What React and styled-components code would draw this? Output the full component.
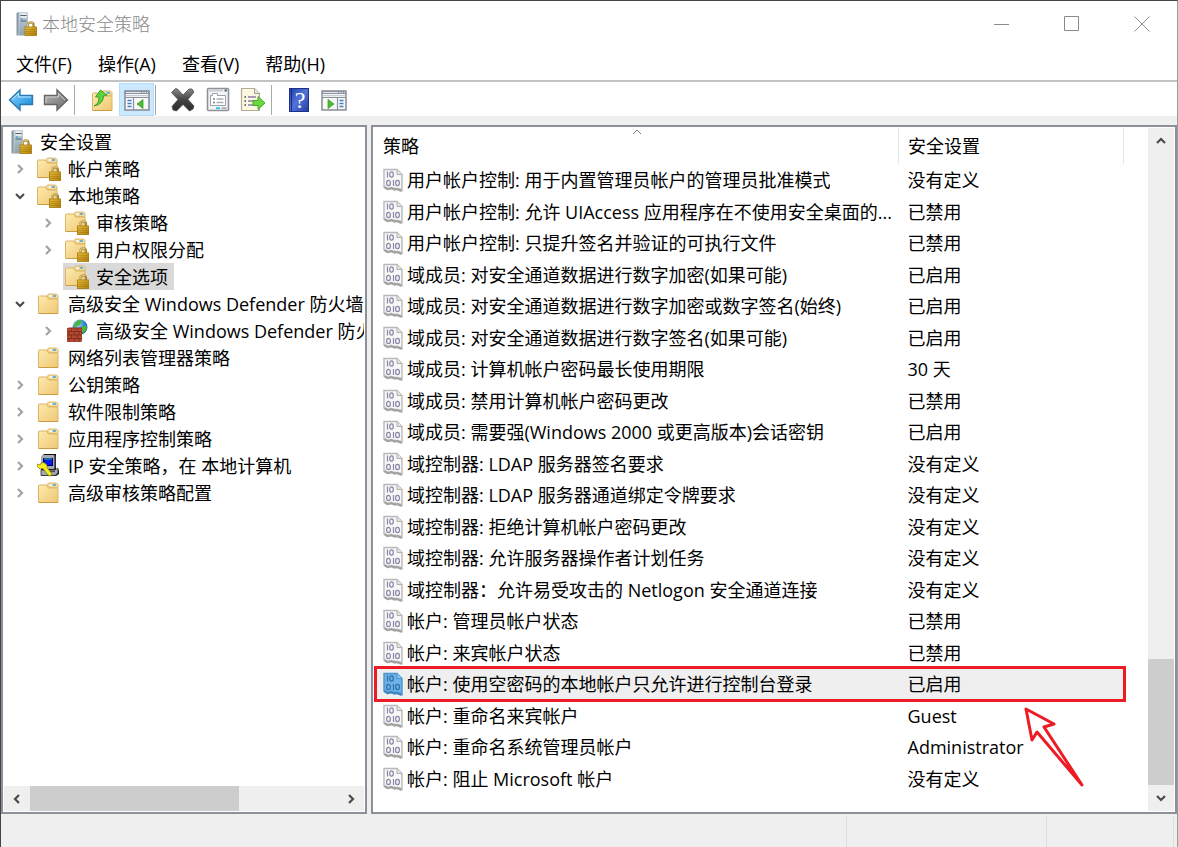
import React, { useState } from 'react';
import styled, { createGlobalStyle } from 'styled-components';

const GlobalStyle = createGlobalStyle`
  * {
    box-sizing: border-box;
  }

  body {
    margin: 0;
    background: #efefef;
    color: #000;
    font-family: "Open Sans", "Noto Sans CJK SC", sans-serif;
    font-size: 18px;
    line-height: 26px;
  }

  button {
    margin: 0;
    padding: 0;
    border: 0;
    background: none;
    color: inherit;
    font: inherit;
  }

  svg {
    display: block;
    flex: none;
  }
`;

const Window = styled.div`
  min-height: 100vh;
  display: flex;
  flex-direction: column;
  border: solid #444;
  border-width: 1px 1px 0 1px;
  border-right-color: #9a9a9a;
`;

const TitleBar = styled.header`
  height: 46px;
  display: flex;
  align-items: center;
  padding-left: 13px;
  background: #fff;
`;

const Title = styled.h1`
  flex: 1;
  margin: 0 0 0 4px;
  font-size: 18px;
  font-weight: 300;
  color: #8a8a8a;
`;

const WindowButton = styled.button`
  width: 70px;
  height: 46px;
  display: flex;
  align-items: center;
  justify-content: center;
`;

const MenuBar = styled.nav`
  height: 33px;
  display: flex;
  align-items: center;
  padding-left: 2px;
  background: #fff;
`;

const MenuButton = styled.button`
  padding: 0 13px;
  white-space: nowrap;
`;

const ToolBar = styled.div`
  height: 36px;
  display: flex;
  align-items: center;
  padding: 1px 0 0 2px;
  background: #fff;
  border-top: 2px solid #c3c3c3;
`;

const ToolButton = styled.button`
  width: 35px;
  height: 33px;
  display: flex;
  align-items: center;
  justify-content: center;
  background: ${props => props.$active ? '#cce8ff' : 'transparent'};
  border: 1px solid ${props => props.$active ? '#b5dcfa' : 'transparent'};
`;

const Separator = styled.div`
  width: 11px;
  height: 30px;
  display: flex;

  &::before {
    content: "";
    margin-left: 1px;
    width: 1px;
    background: #a8a8a8;
  }
`;

const Main = styled.main`
  flex: 1;
  display: flex;
  gap: 4px;
  padding-top: 9px;
`;

const Panel = styled.section`
  display: flex;
  min-width: 0;
  background: #fff;
  border: 2px solid #8c9099;
  padding: 1px;
`;

const TreePanel = styled(Panel)`
  flex: none;
  width: 366px;
  flex-direction: column;
`;

const ListPanel = styled(Panel)`
  flex: 1;
`;

const Tree = styled.ul`
  flex: 1;
  margin: 0;
  padding: 0;
  overflow: hidden;
  list-style: none;
`;

const TreeRow = styled.li`
  height: 27px;
  display: flex;
  padding-left: ${props => 3 + (props.$level - 1) * 28}px;
`;

const Expander = styled.button`
  width: 28px;
  flex: none;
  display: flex;
  align-items: center;
  justify-content: center;
  padding-right: 2px;
`;

const TreeLabel = styled.button`
  display: flex;
  align-items: center;
  gap: 7px;
  padding: 0 6px 0 2px;
  white-space: nowrap;
  background: ${props => props.$selected ? '#d9d9d9' : 'transparent'};
`;

const HScroll = styled.div`
  height: 25px;
  display: flex;
  background: #efefef;
`;

const VScroll = styled.div`
  width: 26px;
  flex: none;
  display: flex;
  flex-direction: column;
  background: #efefef;
`;

const ScrollButton = styled.button`
  flex: none;
  width: 26px;
  height: 26px;
  display: flex;
  align-items: center;
  justify-content: center;
`;

const Track = styled.div`
  flex: 1;
  display: flex;
  flex-direction: ${props => props.$vertical ? 'column' : 'row'};
  justify-content: ${props => props.$vertical ? 'flex-end' : 'flex-start'};
`;

const HThumb = styled.div`
  width: 68%;
  background: #cdcdcd;
`;

const VThumb = styled.div`
  height: 20%;
  background: #cdcdcd;
`;

const ListArea = styled.div`
  flex: 1;
  min-width: 0;
  padding: 0 24px 0 2px;
`;

const PolicyTable = styled.table`
  width: 100%;
  table-layout: fixed;
  border-collapse: collapse;

  th:last-child {
    width: 225px;
  }
`;

const HeadCell = styled.th`
  position: relative;
  height: 36px;
  padding: 0 9px 0 ${props => props.$first ? '7px' : '9px'};
  font-weight: 400;
  text-align: left;
  border-right: 1px solid #e5e5e5;
`;

const SortMark = styled.span`
  position: absolute;
  top: 0;
  left: 50%;
  margin-left: -5px;
`;

const PolicyRow = styled.tr`
  height: 32px;
  background: ${props => props.$selected ? '#efefef' : 'transparent'};
  outline: ${props => props.$selected ? '3px solid #ed1c24' : 'none'};
  outline-offset: -1px;

  &:nth-child(even) {
    height: 31px;
  }
`;

const Cell = styled.td`
  position: relative;
  padding: ${props => props.$first ? '0 0 0 7px' : '0 9px'};
`;

const PolicyName = styled.div`
  display: flex;
  align-items: center;
  gap: 4px;

  span {
    overflow: hidden;
    white-space: nowrap;
    text-overflow: ellipsis;
  }
`;

const Pointer = styled.svg`
  position: absolute;
  top: 36px;
  right: 38px;
`;

const StatusBar = styled.footer`
  height: 33px;
  display: flex;
  padding: 3px 3px 0 0;
`;

const StatusPart = styled.div`
  flex: ${props => props.$wide ? '1' : 'none'};
  width: ${props => props.$wide ? 'auto' : props.$last ? '127px' : '200px'};
  border-right: 1px solid #dcdcdc;
`;

const Gradients = () => (
  <svg width="0" height="0" style={{ position: 'absolute' }} aria-hidden="true">
    <defs>
      <linearGradient id="folder" x1="0" y1="0" x2="1" y2="1">
        <stop offset="0" stopColor="#fdebb0" />
        <stop offset="1" stopColor="#efc773" />
      </linearGradient>
      <linearGradient id="gold" x1="0" y1="0" x2="1" y2="1">
        <stop offset="0" stopColor="#f2cb45" />
        <stop offset="1" stopColor="#b07d08" />
      </linearGradient>
      <linearGradient id="server" x1="0" y1="0" x2="0" y2="1">
        <stop offset="0" stopColor="#c3d0d8" />
        <stop offset="1" stopColor="#8fa1ad" />
      </linearGradient>
      <linearGradient id="blue" x1="0" y1="0" x2="1" y2="1">
        <stop offset="0" stopColor="#8fd6ff" />
        <stop offset="1" stopColor="#0f86d8" />
      </linearGradient>
      <linearGradient id="grey" x1="0" y1="0" x2="1" y2="1">
        <stop offset="0" stopColor="#b5b5b5" />
        <stop offset="1" stopColor="#6c6c6c" />
      </linearGradient>
      <linearGradient id="cross" x1="0" y1="0" x2="0" y2="1">
        <stop offset="0" stopColor="#8a8a8a" />
        <stop offset="0.5" stopColor="#444" />
        <stop offset="1" stopColor="#2b2b2b" />
      </linearGradient>
      <linearGradient id="help" x1="0" y1="0" x2="1" y2="1">
        <stop offset="0" stopColor="#2342ad" />
        <stop offset="0.5" stopColor="#5273d8" />
        <stop offset="1" stopColor="#213da0" />
      </linearGradient>
      <radialGradient id="globe" cx="0.35" cy="0.3" r="0.8">
        <stop offset="0" stopColor="#b8e6ff" />
        <stop offset="0.5" stopColor="#2f8fdc" />
        <stop offset="1" stopColor="#0c3f9c" />
      </radialGradient>
    </defs>
  </svg>
);

const Lock = () => (
  <g>
    <path d="M14.800 15.500v-2.300a2.900 2.900 0 0 1 5.800 0v2.300" fill="none" stroke="#a8893a" strokeWidth="2.200" />
    <path d="M14.500 15v-2a3.100 3.100 0 0 1 5.500-1.800" fill="none" stroke="#ecd999" strokeWidth="0.900" />
    <rect x="12" y="15" width="11.500" height="8.500" fill="url(#gold)" stroke="#a27508" strokeWidth="0.800" />
    <path d="M12.500 17.300h10.500M12.500 19.300h10.500M12.500 21.300h10.500" stroke="#8f6503" strokeWidth="0.700" opacity="0.700" />
  </g>
);

const FolderShape = () => (
  <g>
    <path d="M10 5V2.500l1.500-1.500h8L21 2.500V6z" fill="#f6dd9b" stroke="#d3a954" strokeWidth="0.800" />
    <path d="M1.500 20.500V4q0-1 1-1h7l2 3h8.500q1 0 1 1v13.500z" fill="url(#folder)" stroke="#dbb465" strokeWidth="1" />
    <path d="M13 3h2.500" stroke="#fff" strokeWidth="1.600" />
    <path d="M15.500 3h3.500" stroke="#4ea5de" strokeWidth="1.600" />
    <path d="M2 20.500h19" stroke="#c99b45" strokeWidth="1" />
  </g>
);

const ServerLock = () => (
  <svg width="24" height="24" viewBox="0 0 24 24" aria-hidden="true">
    <path d="M2.500 1L5 0v22l-2.500 1.500z" fill="#8798a3" />
    <path d="M5 0h9v23.500H2.500L5 22z" fill="url(#server)" />
    <path d="M5 .500v22" stroke="#dbe4ea" strokeWidth="0.600" />
    <path d="M6.500 2h6M6.500 5h6" stroke="#f4f8fa" strokeWidth="1.300" />
    <path d="M6.500 3.500h6M6.500 9h6" stroke="#53646f" strokeWidth="1" />
    <path d="M7 7h1.500" stroke="#29a9e8" strokeWidth="1.400" />
    <g transform="translate(-1 0)"><Lock /></g>
  </svg>
);

const Folder = () => (
  <svg width="24" height="24" viewBox="0 0 24 24" aria-hidden="true">
    <g transform="translate(0 1)"><FolderShape /></g>
  </svg>
);

const FolderLock = () => (
  <svg width="24" height="24" viewBox="0 0 24 24" aria-hidden="true">
    <g transform="translate(-1 0)"><FolderShape /></g>
    <g transform="translate(0.500 0)"><Lock /></g>
  </svg>
);

const Firewall = () => (
  <svg width="24" height="24" viewBox="0 0 24 24" aria-hidden="true">
    <circle cx="15" cy="8" r="7.500" fill="url(#globe)" />
    <path d="M10 4q2-3 6-3l1 2-2 3-3 1-2 2-1-2zM17 8l4-2 1 3-2 4-3 1-1-3z" fill="#4eb53c" />
    <path d="M2 9.500l2-1h13v13l-2 1.500H2z" fill="#8f2f20" />
    <path d="M2 9.500h14.500V23H2z" fill="#b5492f" />
    <path d="M2 12.500h14.500M2 16h14.500M2 19.500h14.500M6.500 9.500v3M12 9.500v3M4 12.500V16M9.500 12.500V16M14 12.500V16M6.500 16v3.500M12 16v3.500M4 19.500V23M9.500 19.500V23M14 19.500V23" stroke="#7a2a1c" strokeWidth="0.800" fill="none" />
  </svg>
);

const IpComputer = () => (
  <svg width="24" height="24" viewBox="0 0 24 24" aria-hidden="true">
    <path d="M5 2l2-2h12v15l3 1v4l-3 2H4V6z" fill="#111" />
    <path d="M4 3l2-2h11v14H4z" fill="#a9a9b3" />
    <path d="M17 1l1.500 1v12L17 15z" fill="#55555f" />
    <path d="M6 4h10v8H6z" fill="#000060" />
    <path d="M8 6h7v5H8z" fill="#001cf0" />
    <path d="M7 5h8" stroke="#26d6e8" strokeWidth="1" />
    <path d="M4 16h14l3-2v5l-3 2.500H4z" fill="#a5a5ad" stroke="#333" strokeWidth="0.800" />
    <path d="M12 17.500h6" stroke="#4c4c52" strokeWidth="1.200" />
    <path d="M0 10l3 1 1-2 3-.5 3 2.500v2.500l5 6.500-1.500 2-2-.5-5.500-7-3 .5-3-3z" fill="#f6ee19" stroke="#77720a" strokeWidth="0.700" />
  </svg>
);

const treeIcons = {
  server: ServerLock,
  folder: Folder,
  locked: FolderLock,
  firewall: Firewall,
  ip: IpComputer,
};

// binary page icon in front of every policy
const PolicyIcon = ({ selected }) => {
  const ink = selected ? '#2c72ad' : '#8a86a8';
  return (
    <svg width="20" height="24" viewBox="0 0 20 24" aria-hidden="true">
      <path
        d="M1 1.500h13l5 5V22.500l-2-1.500-2 1-3-2-2 1-2-.5-3 1L1 19z"
        fill={selected ? '#6db1e6' : '#f7f7f7'}
        stroke={selected ? '#4b95d0' : '#b9b9b9'}
        strokeWidth="1.400"
      />
      <path d="M14 1.500v5h5" fill={selected ? '#8fc7f1' : '#e2e2e2'} stroke={selected ? '#4b95d0' : '#b0b0b0'} />
      <path d="M1.500 19l3 2 4-1 3 1.500 3-.5 4 2" fill="none" stroke={selected ? '#3f86c2' : '#a3a3a3'} strokeWidth="2.200" />
      <g fill="none" stroke={ink} strokeWidth="1.200">
        <path d="M4.500 3.500v6M10.500 12v6" />
        <ellipse cx="8.500" cy="6.500" rx="1.800" ry="2.600" />
        <ellipse cx="5.500" cy="15" rx="1.900" ry="2.600" />
        <ellipse cx="14.500" cy="15" rx="1.900" ry="2.600" />
      </g>
    </svg>
  );
};

const Chevron = ({ dir, dark }) => {
  const paths = {
    right: 'M4 2l4 4-4 4',
    left: 'M8 2L4 6l4 4',
    down: 'M2 4l4 4 4-4',
    up: 'M2 8l4-4 4 4',
  };
  return (
    <svg width="12" height="12" viewBox="0 0 12 12" aria-hidden="true">
      <path d={paths[dir]} fill="none" stroke={dark ? '#4a4a4a' : '#a3a3a3'} strokeWidth="2.200" />
    </svg>
  );
};

const BackIcon = () => (
  <svg width="26" height="24" viewBox="0 0 26 24" aria-hidden="true">
    <path d="M1.500 12L12 2v5.500h12.500v9H12V22z" fill="url(#blue)" stroke="#2879b5" strokeWidth="1.400" />
    <path d="M4 11.500l6.500-6V9h12.500" fill="none" stroke="#bfe8ff" strokeWidth="1" />
  </svg>
);

const ForwardIcon = () => (
  <svg width="26" height="24" viewBox="0 0 26 24" aria-hidden="true">
    <path d="M24.500 12L14 2v5.500H1.500v9H14V22z" fill="url(#grey)" stroke="#666" strokeWidth="1.400" />
    <path d="M3 15V9h12.500V5.500L22 12" fill="none" stroke="#cfcfcf" strokeWidth="1" />
  </svg>
);

const UpFolderIcon = () => (
  <svg width="24" height="24" viewBox="0 0 24 24" aria-hidden="true">
    <g transform="translate(1 2)"><FolderShape /></g>
    <path d="M4 18q5-2 5-9H5.500L10.500 2l6.500 5-3.500 1q0 8-9.500 10z" fill="#5fd23c" stroke="#2f9a1e" strokeWidth="0.900" />
  </svg>
);

const ConsoleIcon = ({ flip }) => (
  <svg width="26" height="24" viewBox="0 0 26 24" aria-hidden="true">
    <rect x="1" y="3" width="24" height="19" fill="#f8f8f8" stroke="#7f848c" strokeWidth="1.400" />
    <path d="M1 3h24v3H1z" fill="#8b929d" />
    <path d="M2 4.500h15M18 4.500h1.500M20.500 4.500H22M23 4.500h1" stroke="#e6eaf0" strokeWidth="1" />
    <path d="M1.500 7.700h23" stroke="#b9c0ca" strokeWidth="1" />
    <path d="M1.500 9.500h23" stroke="#8b929d" strokeWidth="1" />
    <path d={flip ? 'M16.500 9.500V22' : 'M9.500 9.500V22'} stroke="#8b929d" strokeWidth="1.200" />
    <path d={flip ? 'M18.500 12.500h4M18.500 15.500h4M18.500 18.500h4' : 'M3.500 12.500h4M3.500 15.500h4M3.500 18.500h4'} stroke="#3f7fc4" strokeWidth="1.400" />
    <path d={flip ? 'M7 11.500l6 4.500-6 4.500z' : 'M19 11.500L13 16l6 4.500z'} fill="#4dbd33" stroke="#34921f" strokeWidth="0.700" />
  </svg>
);

const DeleteIcon = () => (
  <svg width="26" height="26" viewBox="0 0 26 26" aria-hidden="true">
    <path d="M1.500 5.500l4-4 2 .5 5.500 6 6-6 3 0 2 3-6 7.500 6 6.500-1 3-3.500 2-6.500-6.500L6.500 24 3 23l-1-3.500 6-7z" fill="url(#cross)" stroke="#4c4c4c" strokeWidth="0.800" />
  </svg>
);

const PropertiesIcon = () => (
  <svg width="24" height="26" viewBox="0 0 24 26" aria-hidden="true">
    <rect x="1.500" y="1.500" width="21" height="22" rx="1" fill="#f3f4f6" stroke="#8e9299" strokeWidth="1.600" />
    <path d="M3 3.500h14" stroke="#c8ccd2" strokeWidth="2" />
    <path d="M18.500 3.500h2.500" stroke="#5b6069" strokeWidth="2" />
    <path d="M4.500 8.500v10h15v-10h-8v-2h-5v2z" fill="#fff" stroke="#9aa1ab" strokeWidth="1" />
    <path d="M7 12h2M7 15.500h2" stroke="#777f8b" strokeWidth="1.400" />
    <path d="M10.500 12h7M10.500 15.500h7" stroke="#aab0ba" strokeWidth="1.400" />
    <path d="M10 21.200h4" stroke="#27c3ea" strokeWidth="1.800" />
    <path d="M15.500 21.200h5" stroke="#a8adb5" strokeWidth="1.800" />
  </svg>
);

const ExportIcon = () => (
  <svg width="26" height="26" viewBox="0 0 26 26" aria-hidden="true">
    <path d="M1.500 1.500h13l5 5v17h-18z" fill="#fcf7e0" stroke="#b3ad95" strokeWidth="1.200" />
    <path d="M14.500 1.500v5h5" fill="#e4e4e4" stroke="#9d9d9d" />
    <path d="M4.500 10h1.500M4.500 14h1.500M4.500 18h1.500" stroke="#444" strokeWidth="1.600" />
    <path d="M8 10h8M8 14h5M8 18h5" stroke="#8b7fa8" strokeWidth="1.300" />
    <path d="M13 13.500h5V9.500l7 6.500-7 6.500v-4h-5z" fill="#69d840" stroke="#3da023" strokeWidth="0.900" />
  </svg>
);

const HelpIcon = () => (
  <svg width="20" height="26" viewBox="0 0 20 26" aria-hidden="true">
    <rect x="0.500" y="1.500" width="19" height="23" fill="url(#help)" stroke="#1b3088" />
    <path d="M2.500 2v22" stroke="#152a80" strokeWidth="1" />
    <text x="11" y="21" textAnchor="middle" fontFamily="Liberation Serif, serif" fontSize="24" fontWeight="400" fill="#fff">?</text>
  </svg>
);

const treeItems = [
  { level: 0, icon: 'server', text: '安全设置' },
  { level: 1, icon: 'locked', text: '帐户策略', state: 'closed' },
  { level: 1, icon: 'locked', text: '本地策略', state: 'open' },
  { level: 2, icon: 'locked', text: '审核策略', state: 'closed' },
  { level: 2, icon: 'locked', text: '用户权限分配', state: 'closed' },
  { level: 2, icon: 'locked', text: '安全选项' },
  { level: 1, icon: 'folder', text: '高级安全 Windows Defender 防火墙', state: 'open' },
  { level: 2, icon: 'firewall', text: '高级安全 Windows Defender 防火墙', state: 'closed' },
  { level: 1, icon: 'folder', text: '网络列表管理器策略' },
  { level: 1, icon: 'folder', text: '公钥策略', state: 'closed' },
  { level: 1, icon: 'folder', text: '软件限制策略', state: 'closed' },
  { level: 1, icon: 'folder', text: '应用程序控制策略', state: 'closed' },
  { level: 1, icon: 'ip', text: 'IP 安全策略，在 本地计算机', state: 'closed' },
  { level: 1, icon: 'folder', text: '高级审核策略配置', state: 'closed' },
];

const policies = [
  ['用户帐户控制: 用于内置管理员帐户的管理员批准模式', '没有定义'],
  ['用户帐户控制: 允许 UIAccess 应用程序在不使用安全桌面的...', '已禁用'],
  ['用户帐户控制: 只提升签名并验证的可执行文件', '已禁用'],
  ['域成员: 对安全通道数据进行数字加密(如果可能)', '已启用'],
  ['域成员: 对安全通道数据进行数字加密或数字签名(始终)', '已启用'],
  ['域成员: 对安全通道数据进行数字签名(如果可能)', '已启用'],
  ['域成员: 计算机帐户密码最长使用期限', '30 天'],
  ['域成员: 禁用计算机帐户密码更改', '已禁用'],
  ['域成员: 需要强(Windows 2000 或更高版本)会话密钥', '已启用'],
  ['域控制器: LDAP 服务器签名要求', '没有定义'],
  ['域控制器: LDAP 服务器通道绑定令牌要求', '没有定义'],
  ['域控制器: 拒绝计算机帐户密码更改', '没有定义'],
  ['域控制器: 允许服务器操作者计划任务', '没有定义'],
  ['域控制器：允许易受攻击的 Netlogon 安全通道连接', '没有定义'],
  ['帐户: 管理员帐户状态', '已禁用'],
  ['帐户: 来宾帐户状态', '已禁用'],
  ['帐户: 使用空密码的本地帐户只允许进行控制台登录', '已启用'],
  ['帐户: 重命名来宾帐户', 'Guest'],
  ['帐户: 重命名系统管理员帐户', 'Administrator'],
  ['帐户: 阻止 Microsoft 帐户', '没有定义'],
];

function TreeItem({ item, selected, onSelect }) {
  const Icon = treeIcons[item.icon];

  return (
    <TreeRow $level={Math.max(item.level, 1)}>
      {item.level > 0 && (
        item.state
          ? (
            <Expander aria-label={item.state === 'open' ? '折叠' : '展开'}>
              <Chevron dir={item.state === 'open' ? 'down' : 'right'} dark={item.state === 'open'} />
            </Expander>
          )
          : <Expander as="span" />
      )}
      <TreeLabel $selected={selected} onClick={onSelect}>
        <Icon />
        <span>{item.text}</span>
      </TreeLabel>
    </TreeRow>
  );
}

function App() {
  const [node, setNode] = useState(5);
  const [policy, setPolicy] = useState(16);

  return (
    <Window>
      <GlobalStyle />
      <Gradients />
      <TitleBar>
        <ServerLock />
        <Title>本地安全策略</Title>
        <WindowButton aria-label="最小化">
          <svg width="16" height="16" viewBox="0 0 16 16"><path d="M0 8.500h15" stroke="#8a8a8a" /></svg>
        </WindowButton>
        <WindowButton aria-label="最大化">
          <svg width="16" height="16" viewBox="0 0 16 16"><path d="M.5.500h14v14H.5z" fill="none" stroke="#8a8a8a" /></svg>
        </WindowButton>
        <WindowButton aria-label="关闭">
          <svg width="16" height="16" viewBox="0 0 16 16"><path d="M.5.500l15 15M15.500.500l-15 15" stroke="#8a8a8a" /></svg>
        </WindowButton>
      </TitleBar>
      <MenuBar>
        <MenuButton>文件(F)</MenuButton>
        <MenuButton>操作(A)</MenuButton>
        <MenuButton>查看(V)</MenuButton>
        <MenuButton>帮助(H)</MenuButton>
      </MenuBar>
      <ToolBar>
        <ToolButton aria-label="后退"><BackIcon /></ToolButton>
        <ToolButton aria-label="前进"><ForwardIcon /></ToolButton>
        <Separator />
        <ToolButton aria-label="上一级"><UpFolderIcon /></ToolButton>
        <ToolButton aria-label="显示控制台树" $active><ConsoleIcon /></ToolButton>
        <Separator />
        <ToolButton aria-label="删除"><DeleteIcon /></ToolButton>
        <ToolButton aria-label="属性"><PropertiesIcon /></ToolButton>
        <ToolButton aria-label="导出列表"><ExportIcon /></ToolButton>
        <Separator />
        <ToolButton aria-label="帮助"><HelpIcon /></ToolButton>
        <ToolButton aria-label="显示操作窗格"><ConsoleIcon flip /></ToolButton>
      </ToolBar>
      <Main>
        <TreePanel>
          <Tree>
            {treeItems.map((item, i) => (
              <TreeItem key={i} item={item} selected={i === node} onSelect={() => setNode(i)} />
            ))}
          </Tree>
          <HScroll>
            <ScrollButton aria-label="向左滚动"><Chevron dir="left" dark /></ScrollButton>
            <Track><HThumb /></Track>
            <ScrollButton aria-label="向右滚动"><Chevron dir="right" dark /></ScrollButton>
          </HScroll>
        </TreePanel>
        <ListPanel>
          <ListArea>
            <PolicyTable>
              <thead>
                <tr>
                  <HeadCell $first>
                    策略
                    <SortMark>
                      <svg width="10" height="8" viewBox="0 0 10 8"><path d="M1 6l4-4 4 4" fill="none" stroke="#777" /></svg>
                    </SortMark>
                  </HeadCell>
                  <HeadCell>安全设置</HeadCell>
                </tr>
              </thead>
              <tbody>
                {policies.map(([name, value], i) => (
                  <PolicyRow key={name} $selected={i === policy} onClick={() => setPolicy(i)}>
                    <Cell $first>
                      <PolicyName>
                        <PolicyIcon selected={i === policy} />
                        <span>{name}</span>
                      </PolicyName>
                    </Cell>
                    <Cell>
                      {value}
                      {i === policy && (
                        <Pointer width="64" height="86" viewBox="0 0 64 86" aria-hidden="true">
                          <path d="M4 5L32 20 22 23 60 81 15 28 10 36z" fill="#fff" stroke="#ed1c24" strokeWidth="3" strokeLinejoin="round" />
                        </Pointer>
                      )}
                    </Cell>
                  </PolicyRow>
                ))}
              </tbody>
            </PolicyTable>
          </ListArea>
          <VScroll>
            <ScrollButton aria-label="向上滚动"><Chevron dir="up" dark /></ScrollButton>
            <Track $vertical><VThumb /></Track>
            <ScrollButton aria-label="向下滚动"><Chevron dir="down" dark /></ScrollButton>
          </VScroll>
        </ListPanel>
      </Main>
      <StatusBar>
        <StatusPart $wide />
        <StatusPart />
        <StatusPart $last />
      </StatusBar>
    </Window>
  );
}

export default App;
